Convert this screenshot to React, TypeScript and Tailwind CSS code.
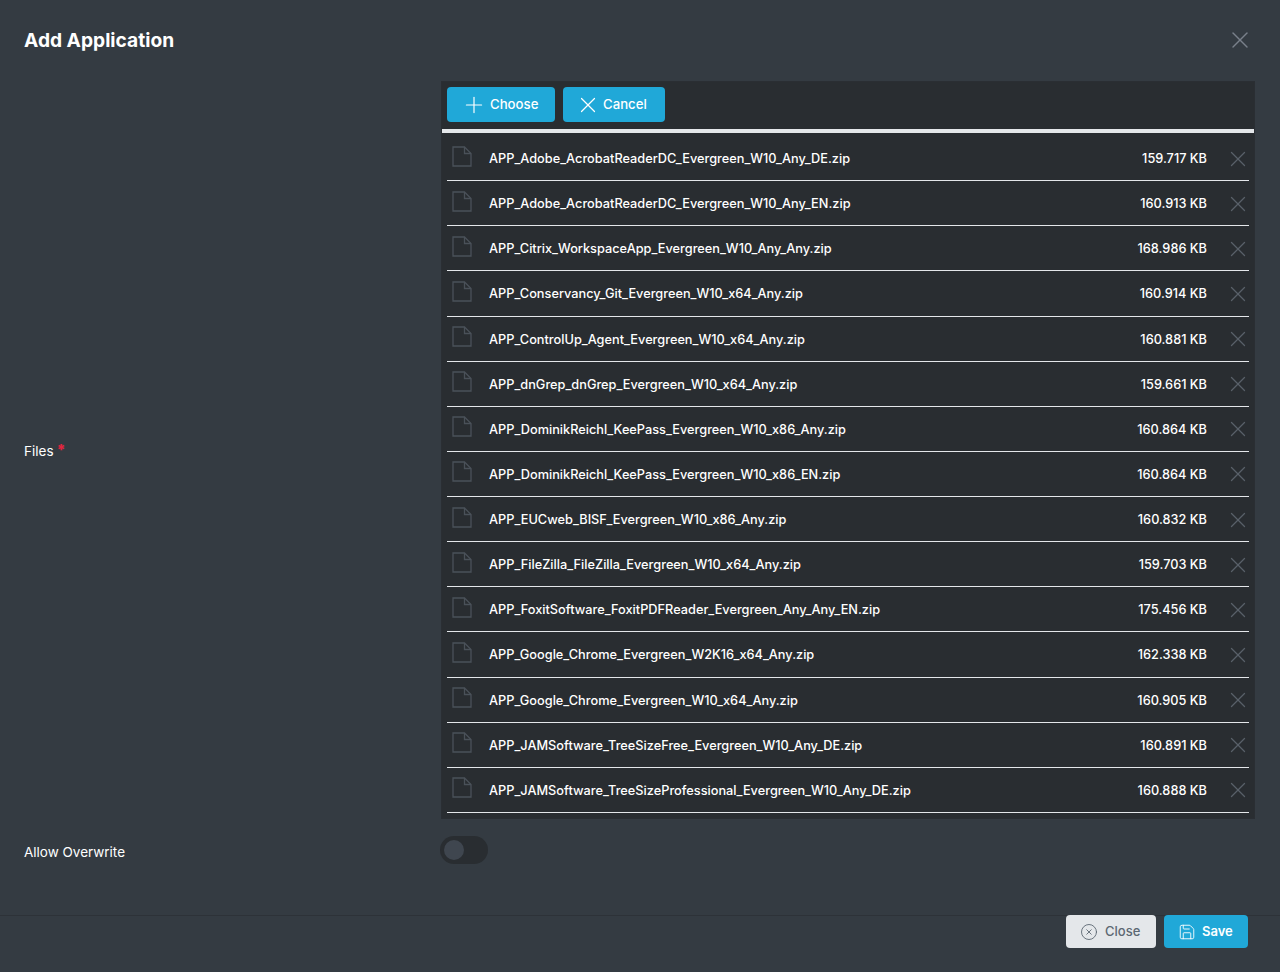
import React from 'react';
import { Plus, X, CircleX, Save } from 'lucide-react';

const FILES = [
  { name: 'APP_Adobe_AcrobatReaderDC_Evergreen_W10_Any_DE.zip', size: '159.717 KB' },
  { name: 'APP_Adobe_AcrobatReaderDC_Evergreen_W10_Any_EN.zip', size: '160.913 KB' },
  { name: 'APP_Citrix_WorkspaceApp_Evergreen_W10_Any_Any.zip', size: '168.986 KB' },
  { name: 'APP_Conservancy_Git_Evergreen_W10_x64_Any.zip', size: '160.914 KB' },
  { name: 'APP_ControlUp_Agent_Evergreen_W10_x64_Any.zip', size: '160.881 KB' },
  { name: 'APP_dnGrep_dnGrep_Evergreen_W10_x64_Any.zip', size: '159.661 KB' },
  { name: 'APP_DominikReichl_KeePass_Evergreen_W10_x86_Any.zip', size: '160.864 KB' },
  { name: 'APP_DominikReichl_KeePass_Evergreen_W10_x86_EN.zip', size: '160.864 KB' },
  { name: 'APP_EUCweb_BISF_Evergreen_W10_x86_Any.zip', size: '160.832 KB' },
  { name: 'APP_FileZilla_FileZilla_Evergreen_W10_x64_Any.zip', size: '159.703 KB' },
  { name: 'APP_FoxitSoftware_FoxitPDFReader_Evergreen_Any_Any_EN.zip', size: '175.456 KB' },
  { name: 'APP_Google_Chrome_Evergreen_W2K16_x64_Any.zip', size: '162.338 KB' },
  { name: 'APP_Google_Chrome_Evergreen_W10_x64_Any.zip', size: '160.905 KB' },
  { name: 'APP_JAMSoftware_TreeSizeFree_Evergreen_W10_Any_DE.zip', size: '160.891 KB' },
  { name: 'APP_JAMSoftware_TreeSizeProfessional_Evergreen_W10_Any_DE.zip', size: '160.888 KB' },
];

const FileIcon: React.FC = () => (
  <svg width="20" height="21" viewBox="0 0 20 21" fill="none" stroke="#4a5159" strokeWidth="1.3" className="ml-[5px] mb-[5px] shrink-0">
    <path d="M1 1H12.5L19 7.5V20H1Z" />
    <path d="M12.5 1V7.5H19" />
  </svg>
);

const App: React.FC = () => {
  return (
    <div className="h-[972px] flex flex-col bg-[#343b42] text-white text-[13.5px] font-['Inter',sans-serif] overflow-hidden">
      {/* Header */}
      <div className="h-[81px] shrink-0 flex justify-between pl-6 pr-[26px] pt-[27px]">
        <h1 className="text-[19.2px] leading-[26px] font-bold">Add Application</h1>
        <X size={28} strokeWidth={1.2} className="text-[#79808a] -mt-[1px]" />
      </div>

      {/* Form */}
      <div className="flex h-[738px] shrink-0">
        <div className="w-[441px] pl-6 flex items-center pt-[2px]">
          <span className="text-white">Files</span>
          <span className="text-[#e0253f] text-[15px] font-black leading-none ml-[3px] mb-[4px]">*</span>
        </div>
        <div className="w-[814px] flex flex-col bg-[#292d31] border border-[#2a2e33]">
          <div className="h-[47px] shrink-0 flex items-start gap-2 px-[5px] pt-[5px]">
            <button className="h-[35px] w-[108px] flex items-center gap-[3px] pl-[14px] rounded-[4px] bg-[#20a8d8] font-medium text-[13.2px]">
              <Plus size={26} strokeWidth={1.1} />
              <span className="pt-[1px]">Choose</span>
            </button>
            <button className="h-[35px] w-[102px] flex items-center gap-[2px] pl-[12px] rounded-[4px] bg-[#20a8d8] font-medium text-[13.2px]">
              <X size={26} strokeWidth={1.1} />
              <span className="pt-[1px]">Cancel</span>
            </button>
          </div>
          <div className="h-[4px] shrink-0 bg-[#e4e7ea]" />
          <div className="px-[5px] pt-[3px]">
            {FILES.map((file) => (
              <div key={file.name} className="h-[45.13px] flex items-center border-b border-[#e4e7ea] pt-[1px]">
                <FileIcon />
                <span className="ml-[17px] flex-1 font-medium text-[12.75px] text-white whitespace-nowrap">{file.name}</span>
                <span className="font-medium text-[12.75px] text-white">{file.size}</span>
                <X size={26} strokeWidth={1.2} className="text-[#596069] ml-[18px] -mr-[2px] shrink-0" />
              </div>
            ))}
          </div>
        </div>
      </div>

      {/* Allow overwrite */}
      <div className="flex h-[96px] shrink-0 items-start">
        <div className="w-[440px] pl-6 pt-[24px] leading-[18px] text-white">Allow Overwrite</div>
        <div className="mt-[17px] w-[48px] h-[28px] rounded-full bg-[#292d31] flex items-center pl-[4px]">
          <div className="w-5 h-5 rounded-full bg-[#3f464f]" />
        </div>
      </div>

      {/* Footer */}
      <div className="flex-1 border-t border-[#2d3238] flex justify-end gap-2 pr-8 text-[13px]">
        <button className="-mt-px h-[33px] w-[90px] flex items-center gap-[7px] pl-[14px] rounded-[4px] bg-[#e4e7ea] text-[#5c6873] font-medium">
          <CircleX size={18} strokeWidth={1.2} />
          <span className="pt-[1px]">Close</span>
        </button>
        <button className="-mt-px h-[33px] w-[84px] flex items-center gap-[6px] pl-[14px] rounded-[4px] bg-[#20a8d8] font-semibold">
          <Save size={18} strokeWidth={1.2} />
          <span className="pt-[1px]">Save</span>
        </button>
      </div>
    </div>
  );
};

export default App;
